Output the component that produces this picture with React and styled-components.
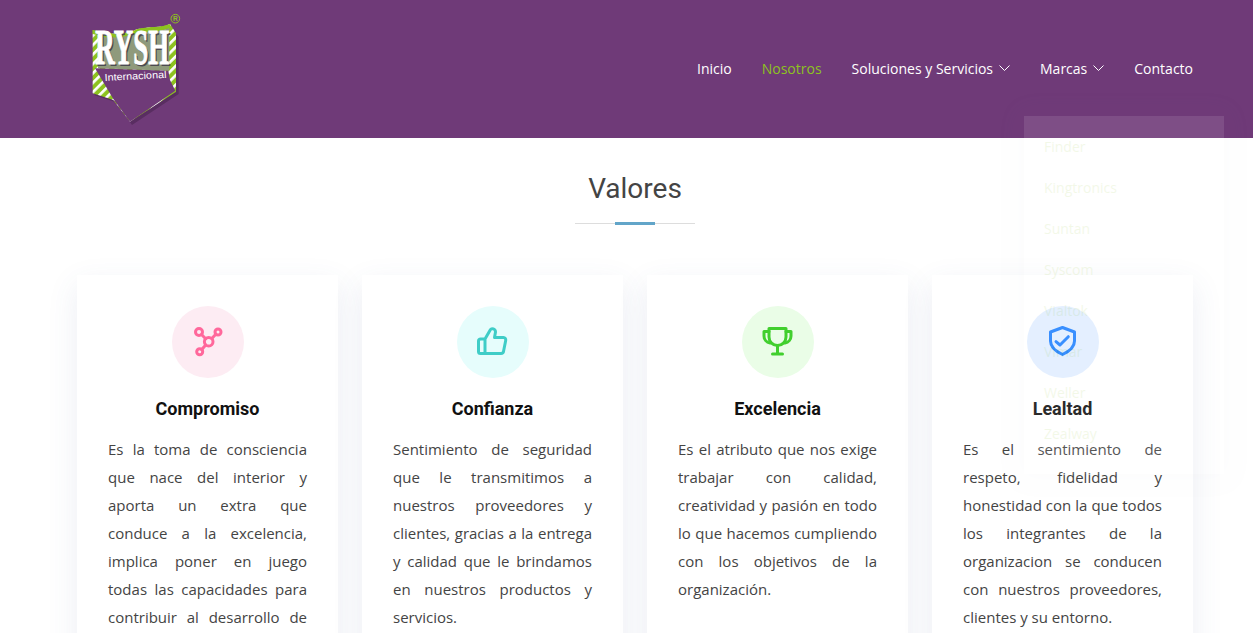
import React from "react";
import styled, { createGlobalStyle } from "styled-components";

const GlobalStyle = createGlobalStyle`
  html, body {
    margin: 0;
    height: 100%;
    overflow: hidden;
    background: #fff;
    font-family: "Open Sans", sans-serif;
  }
`;

const Page = styled.div`
  height: 633px;
  overflow: hidden;
`;

const Header = styled.header`
  position: relative;
  height: 138px;
  background: #6f3a78;
  display: flex;
  justify-content: space-between;
  align-items: center;
  padding: 0 60px 0 88px;
`;

const LogoWrap = styled.div`
  width: 96px;
  height: 120px;
  margin-top: 2px;
`;

const Nav = styled.nav`
  display: flex;
  align-items: center;
  gap: 30px;
  margin-bottom: 2px;
`;

const NavItem = styled.a`
  display: flex;
  align-items: center;
  gap: 6px;
  font-size: 14px;
  color: ${(p) => (p.$active ? "#8dc21f" : "#fff")};
`;

const Dropdown = styled.ul`
  position: absolute;
  top: 116px;
  left: 1024px;
  width: 200px;
  height: 338px;
  margin: 0;
  padding: 10px 0;
  list-style: none;
  background: #fff;
  box-shadow: 0 0 20px rgba(127, 137, 161, 0.25);
  opacity: 0.1;
  z-index: 5;
`;

const DropdownItem = styled.li`
  height: 41px;
  line-height: 41px;
  padding-left: 20px;
  font-size: 14px;
  color: #8dc21f;
`;

const Main = styled.main`
  padding: 0 60px 0 77px;
`;

const Title = styled.h2`
  margin: 0;
  padding: 32px 0 15px;
  width: 1116px;
  text-align: center;
  font-family: Roboto, sans-serif;
  font-size: 28px;
  font-weight: 400;
  line-height: 38px;
  color: #444;
`;

const TitleRule = styled.div`
  width: 120px;
  height: 1px;
  margin: 0 auto;
  background: #ddd;
  display: flex;
  justify-content: center;
  align-items: center;

  &::after {
    content: "";
    flex: none;
    width: 40px;
    height: 3px;
    background: #62a5c9;
  }
`;

const Cards = styled.div`
  display: grid;
  grid-template-columns: repeat(4, 261px);
  gap: 24px;
  margin-top: 51px;
`;

const Card = styled.article`
  height: 420px;
  padding: 31px 31px 0;
  background: #fff;
  box-shadow: 0 10px 29px 0 rgba(68, 88, 144, 0.1);
`;

const IconCircle = styled.div`
  width: 72px;
  height: 72px;
  margin: 0 auto;
  border-radius: 50%;
  display: flex;
  align-items: center;
  justify-content: center;
  background: ${(p) => p.$bg};
  color: ${(p) => p.$fg};
`;

const CardTitle = styled.h4`
  margin: 20px 0 16px;
  text-align: center;
  font-family: Roboto, sans-serif;
  font-size: 18px;
  font-weight: 700;
  line-height: 21px;
  color: #111;
`;

const CardText = styled.p`
  margin: 0;
  font-size: 15px;
  line-height: 28px;
  text-align: justify;
  color: #444;
`;

const Chevron = () => (
  <svg width="11" height="12" viewBox="0 0 11 12" fill="none" stroke="currentColor" strokeWidth="1">
    <path d="M.5 3.500 5.500 8.500 10.500 3.500" />
  </svg>
);

const Glyph = ({ children }) => (
  <svg width="36" height="36" viewBox="0 0 36 36" fill="none" stroke="currentColor" strokeWidth="3" strokeLinecap="round" strokeLinejoin="round">
    {children}
  </svg>
);

const NodesIcon = () => (
  <Glyph>
    <circle cx="9" cy="8" r="3.500" />
    <circle cx="28" cy="8" r="3" />
    <circle cx="18.700" cy="17.700" r="4.300" />
    <circle cx="9.700" cy="27.700" r="3" />
    <path d="M11.500 10.500 15.700 14.700M25.800 10.200 21.800 14.500M15.700 21 11.800 25.500" />
  </Glyph>
);

const ThumbIcon = () => (
  <Glyph>
    <path d="M10 15 15.500 5.500C16.500 4 20.500 4.500 20.500 8L19.500 13.500H28.500C30 13.500 31 15 30.700 16.500L28.600 27C28.400 28.500 27.300 29.500 26 29.500H5.500C4.200 29.500 3.500 28.500 3.500 27.500V17C3.500 15.800 4.300 15 5.500 15H10V29.500" />
  </Glyph>
);

const TrophyIcon = () => (
  <Glyph>
    <path d="M9 4.500H26V13C26 18 22 21.500 17.500 21.500S9 18 9 13Z" />
    <path d="M9 7.500H4V12C4 15.500 6.500 18.500 10 19M26 7.500H31V12C31 15.500 28.500 18.500 25 19" />
    <path d="M17.500 21.500V29.500M12.500 30H22.500" />
  </Glyph>
);

const ShieldIcon = () => (
  <Glyph>
    <path d="M17.500 3.500 29.500 8V17C29.500 23 24 27.500 17.500 30.500 11 27.500 5.500 23 5.500 17V8Z" />
    <path d="M11 17.700 15 21 23.300 12.700" />
  </Glyph>
);

const Logo = () => (
  <svg width="96" height="120" viewBox="54 30 288 360">
    <defs>
      <pattern id="stripes" width="20" height="20" patternUnits="userSpaceOnUse" patternTransform="rotate(45)">
        <rect width="20" height="20" fill="#8dc21f" />
        <rect width="8" height="20" fill="#fff" />
      </pattern>
    </defs>
    <path d="M74 286 136 306 186 375 326 282V110L306 90 74 100Z" fill="#3d1e45" opacity="0.45" />
    <path d="M68 90C120 105 170 105 200 88 240 78 270 85 300 72L318 100V275L180 365 130 300 68 280Z" fill="url(#stripes)" />
    <path d="M68 90C120 105 170 105 200 88 240 78 270 85 300 72L304 84C270 97 240 90 200 100 170 117 120 117 68 102Z" fill="#8dc21f" />
    <path d="M84 108C130 117 170 112 200 100 240 92 270 97 298 84V212L84 205Z" fill="#8f9a7c" />
    <path d="M75 205 295 212 300 240 316 272 180 365 130 297Z" fill="#6f3a78" />
    <text x="80" y="197" fontFamily="Liberation Serif, serif" fontWeight="700" fontSize="150" fill="#4d4a50" textLength="222" lengthAdjust="spacingAndGlyphs">RYSH</text>
    <text x="76" y="193" fontFamily="Liberation Serif, serif" fontWeight="700" fontSize="150" fill="#fff" stroke="#fff" strokeWidth="3" textLength="222" lengthAdjust="spacingAndGlyphs">RYSH</text>
    <text x="104" y="243" fontFamily="Liberation Sans, sans-serif" fontSize="30" fill="#fff" textLength="186" lengthAdjust="spacingAndGlyphs" transform="rotate(-3 104 243)">Internacional</text>
    <circle cx="316" cy="56" r="13" fill="none" stroke="#8dc21f" strokeWidth="3" />
    <text x="316" y="63" textAnchor="middle" fontFamily="Liberation Sans, sans-serif" fontSize="20" fontWeight="700" fill="#8dc21f">R</text>
  </svg>
);

const brands = ["Finder", "Kingtronics", "Suntan", "Syscom", "Vialtok", "Vimar", "Weller", "Zealway"];

const values = [
  {
    title: "Compromiso",
    bg: "#fdecf3",
    fg: "#ff689b",
    icon: <NodesIcon />,
    text: "Es la toma de consciencia que nace del interior y aporta un extra que conduce a la excelencia, implica poner en juego todas las capacidades para contribuir al desarrollo de nuestra organización.",
  },
  {
    title: "Confianza",
    bg: "#e6fdfc",
    fg: "#3fcdc7",
    icon: <ThumbIcon />,
    text: "Sentimiento de seguridad que le transmitimos a nuestros proveedores y clientes, gracias a la entrega y calidad que le brindamos en nuestros productos y servicios.",
  },
  {
    title: "Excelencia",
    bg: "#eafde7",
    fg: "#41cf2e",
    icon: <TrophyIcon />,
    text: "Es el atributo que nos exige trabajar con calidad, creatividad y pasión en todo lo que hacemos cumpliendo con los objetivos de la organización.",
  },
  {
    title: "Lealtad",
    bg: "#e1eeff",
    fg: "#2282ff",
    icon: <ShieldIcon />,
    text: "Es el sentimiento de respeto, fidelidad y honestidad con la que todos los integrantes de la organizacion se conducen con nuestros proveedores, clientes y su entorno.",
  },
];

const App = () => {
  return (
    <Page>
      <GlobalStyle />
      <Header>
        <LogoWrap>
          <Logo />
        </LogoWrap>
        <Nav>
          <NavItem>Inicio</NavItem>
          <NavItem $active>Nosotros</NavItem>
          <NavItem>
            Soluciones y Servicios <Chevron />
          </NavItem>
          <NavItem>
            Marcas <Chevron />
          </NavItem>
          <NavItem>Contacto</NavItem>
        </Nav>
        <Dropdown>
          {brands.map((b) => (
            <DropdownItem key={b}>{b}</DropdownItem>
          ))}
        </Dropdown>
      </Header>
      <Main>
        <Title>Valores</Title>
        <TitleRule />
        <Cards>
          {values.map((v) => (
            <Card key={v.title}>
              <IconCircle $bg={v.bg} $fg={v.fg}>
                {v.icon}
              </IconCircle>
              <CardTitle>{v.title}</CardTitle>
              <CardText>{v.text}</CardText>
            </Card>
          ))}
        </Cards>
      </Main>
    </Page>
  );
};

export default App;
